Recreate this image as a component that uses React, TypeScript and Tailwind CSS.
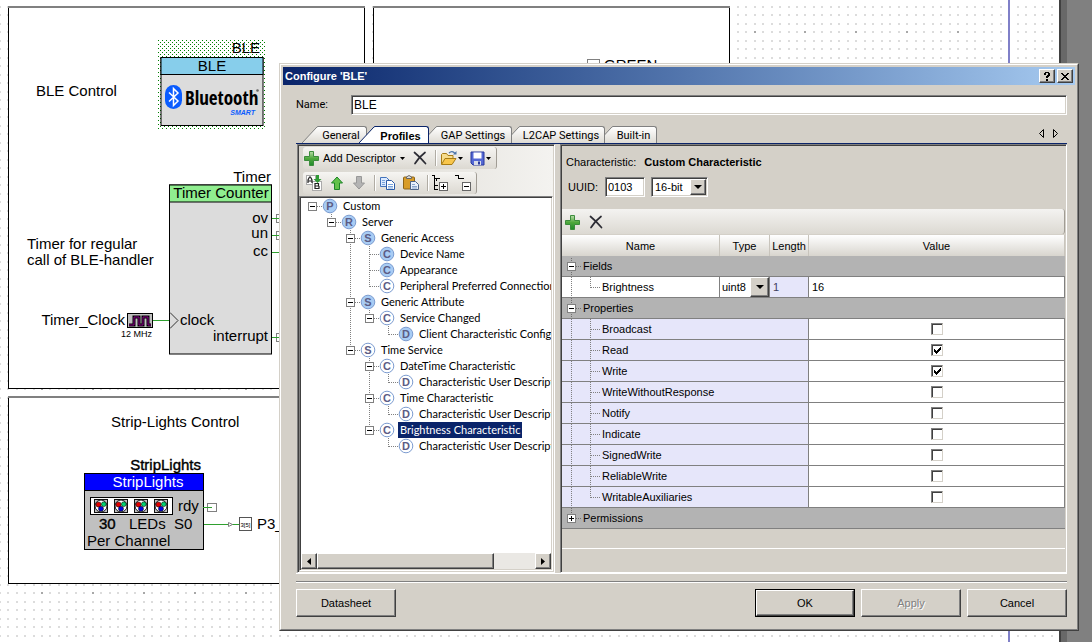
import React, { useState } from "react";

const SUNK =
  "border border-t-[#808080] border-l-[#808080] border-r-white border-b-white shadow-[inset_1px_1px_0_#404040,inset_-1px_-1px_0_#d4d0c8]";
const RAISED =
  "border border-t-white border-l-white border-r-[#404040] border-b-[#404040] bg-[#d4d0c8] shadow-[inset_-1px_-1px_0_#808080]";

/* ---------- schematic behind the dialog ---------- */

const TILE_COLS = 120;
const STEP = 1018 / TILE_COLS;

function gridPath(every: number) {
  let d = "";
  for (let r = 0; r < 6; r += every) {
    for (let c = 0; c < TILE_COLS; c += every) {
      d += `M${Math.round(c * STEP)} ${Math.round(r * 8.5)}h2v2h-2z`;
    }
  }
  return d;
}
const MINOR = gridPath(1);
const MAJOR = gridPath(6);

function Terminal({ x, y }: { x: number; y: number }) {
  return (
    <g>
      <rect x={x + 4.5} y={y - 4} width="9" height="8" fill="#fff" stroke="#808080" />
      <path d={`M${x} ${y}h9`} stroke="#2fa02f" />
    </g>
  );
}

function Led({ x }: { x: number }) {
  return (
    <g transform={`translate(${x} 499)`}>
      <rect x="0.5" y="0.5" width="13" height="13" fill="#c0c0c0" stroke="#111" />
      <circle cx="7" cy="7" r="6" fill="#fff" stroke="#111" />
      <circle cx="4.5" cy="5.5" r="2.6" fill="#e00000" stroke="#111" strokeWidth="0.6" />
      <circle cx="9.8" cy="5.2" r="2.4" fill="#00d070" stroke="#111" strokeWidth="0.6" />
      <circle cx="7" cy="9.8" r="2.5" fill="#0000e0" stroke="#111" strokeWidth="0.6" />
    </g>
  );
}

function Schematic() {
  return (
    <svg className="block h-full w-full font-['Liberation_Sans',sans-serif] text-[15px]">
      <defs>
        <pattern id="dots" x="41" y="31" width="1018" height="51" patternUnits="userSpaceOnUse">
          <path d={MINOR} fill="#dcdcdc" />
          <path d={MAJOR} fill="#a8a8a8" />
        </pattern>
        <pattern id="sel" x="158" y="40" width="4" height="4" patternUnits="userSpaceOnUse">
          <rect width="1" height="1" fill="#008000" />
          <rect x="2" y="2" width="1" height="1" fill="#008000" />
        </pattern>
      </defs>
      <rect width="100%" height="100%" fill="#fff" />
      <rect width="100%" height="100%" fill="url(#dots)" />
      <rect x="1008" width="2" height="100%" fill="#8080c8" />

      <g fill="#fff" stroke="#000">
        <rect x="8.5" y="7.5" width="356" height="381" />
        <rect x="373.5" y="7.5" width="356" height="381" />
        <rect x="8.5" y="397.5" width="721" height="186" />
      </g>
      <path d="M8 7h357M373 7h357M8 397h722" stroke="#808080" strokeWidth="2" />

      <text x="36" y="96">BLE Control</text>
      <rect x="158" y="40" width="108" height="89" fill="url(#sel)" />
      <text x="260" y="53" textAnchor="end">BLE</text>
      <rect x="161" y="57.5" width="102" height="68" fill="#dcdcdc" stroke="#000" />
      <rect x="161" y="57.5" width="102" height="17" fill="#87ceeb" stroke="#000" />
      <text x="212" y="71" textAnchor="middle">BLE</text>
      <rect x="165" y="85" width="17" height="24" rx="8.5" fill="#0a5cff" />
      <path d="M169 92.5l9 8.5-4.5 4.5V88.5l4.5 4.5-9 8.5" fill="none" stroke="#fff" strokeWidth="1.5" />
      <text x="185" y="105" fontSize="19" fontWeight="bold" fontFamily="'Open Sans Condensed','Liberation Sans Narrow','Liberation Sans',sans-serif">
        Bluetooth
      </text>
      <circle cx="257.5" cy="90.5" r="1.3" fill="#666" />
      <text x="255" y="115" fontSize="7" fontWeight="bold" fontStyle="italic" fill="#0a5cff" textAnchor="end">
        SMART
      </text>

      <text x="271" y="182" textAnchor="end">Timer</text>
      <rect x="169.5" y="185" width="102" height="169" fill="#dcdcdc" stroke="#000" />
      <rect x="169.5" y="185" width="102" height="17" fill="#90ee90" stroke="#000" />
      <text x="221" y="198" textAnchor="middle">Timer Counter</text>
      <text x="268" y="223" textAnchor="end">ov</text>
      <text x="268" y="238" textAnchor="end">un</text>
      <text x="268" y="256" textAnchor="end">cc</text>
      <text x="268" y="341" textAnchor="end">interrupt</text>
      <text x="180" y="325">clock</text>
      <path d="M170 312.5l8 8-8 8" fill="none" stroke="#333" />
      <Terminal x={272} y={218.5} />
      <Terminal x={272} y={235.5} />
      <path d="M272 252.5h9M153 320.5h16" stroke="#2fa02f" />
      <Terminal x={272} y={337.5} />
      <text x="27" y="249">Timer for regular</text>
      <text x="27" y="265">call of BLE-handler</text>
      <text x="125" y="325" textAnchor="end">Timer_Clock</text>
      <rect x="127.5" y="313.5" width="25" height="14" fill="#c0c0c0" stroke="#000" />
      <path d="M129 325h5v-8h5v8h4v-8h5v8h3" fill="none" stroke="#000" strokeWidth="3" />
      <path d="M129 325h5v-8h5v8h4v-8h5v8h3" fill="none" stroke="#900090" strokeWidth="1" />
      <text x="152" y="337" fontSize="9" textAnchor="end">12 MHz</text>

      <text x="111" y="427">Strip-Lights Control</text>
      <text x="201" y="470" textAnchor="end" stroke="#000" strokeWidth="0.4">StripLights</text>
      <rect x="84.5" y="473.5" width="119" height="76" fill="#c0c0c0" stroke="#000" />
      <rect x="84.5" y="473.5" width="119" height="17" fill="#0000ff" stroke="#000" />
      <text x="148" y="487" textAnchor="middle" fill="#fff">StripLights</text>
      <rect x="90.5" y="497.5" width="82" height="17" fill="#fff" stroke="#000" />
      <Led x={94} />
      <Led x={114} />
      <Led x={134} />
      <Led x={154} />
      <text x="178" y="511">rdy</text>
      <text x="99" y="529" stroke="#000" strokeWidth="0.4">30</text>
      <text x="129" y="529">LEDs</text>
      <text x="174" y="529">S0</text>
      <text x="87" y="546">Per Channel</text>
      <Terminal x={203} y={507.5} />
      <path d="M204 524.5h35" stroke="#2fa02f" />
      <path d="M228.5 522.5l4 2-4 2z" fill="#fff" stroke="#808080" />
      <rect x="239.5" y="517.5" width="12" height="13" fill="#fff" stroke="#555" />
      <text x="245.5" y="527" fontSize="6" textAnchor="middle">3[5]</text>
      <text x="257" y="529">P3_</text>

      <rect x="587.5" y="59.5" width="12" height="12" fill="#fff" stroke="#808080" />
      <text x="604" y="70">GREEN</text>
    </svg>
  );
}

/* ---------- icons ---------- */

const Plus = () => (
  <svg width="16" height="16" viewBox="0 0 16 16">
    <defs>
      <linearGradient id="plusg" x1="0" y1="0" x2="0" y2="1">
        <stop offset="0" stopColor="#b8dca8" />
        <stop offset="0.5" stopColor="#4fa83c" />
        <stop offset="1" stopColor="#1f8a2c" />
      </linearGradient>
    </defs>
    <path d="M5.5 1.5h4v5h5v4h-5v5h-4v-5h-5v-4h5z" fill="url(#plusg)" stroke="#3c8c3c" strokeLinejoin="round" />
  </svg>
);
const Cross = () => (
  <svg width="14" height="14" viewBox="0 0 14 14">
    <path d="M1.5 1.5Q7 6 12.5 12.5M12 1.5Q6 6 2 12.5" fill="none" stroke="#2c2c34" strokeWidth="1.7" strokeLinecap="round" />
  </svg>
);
const Caret = () => (
  <svg width="5" height="3" viewBox="0 0 5 3">
    <path d="M0 0h5L2.5 3z" fill="#000" />
  </svg>
);
const Folder = () => (
  <svg width="17" height="16" viewBox="0 0 17 16">
    <path d="M1.5 14V4.5l1-1h4l1.5 2h5V8" fill="#f6dc8c" stroke="#a87c14" />
    <path d="M1.5 14.5L5 8.5h11l-4 6z" fill="#f8c64c" stroke="#a87c14" strokeLinejoin="round" />
    <path d="M9 3q3-3 6 .5" fill="none" stroke="#4a74a8" strokeWidth="1.3" />
    <path d="M13 4.5h3.5V1z" fill="#4a74a8" />
  </svg>
);
const Floppy = () => (
  <svg width="15" height="15" viewBox="0 0 15 15">
    <path d="M1 1h13v13H3l-2-2z" fill="#5468d4" stroke="#28389c" />
    <rect x="3.5" y="1.5" width="8" height="6" fill="#fff" />
    <rect x="4" y="10" width="7" height="4" fill="#d8dce8" />
    <rect x="8" y="10.5" width="2" height="3" fill="#28389c" />
  </svg>
);
const Sort = () => (
  <svg width="16" height="16" viewBox="0 0 16 16">
    <rect x="0.5" y="0.5" width="9" height="9" fill="#fff" stroke="#aaa" />
    <rect x="6.5" y="6.5" width="9" height="9" fill="#fff" stroke="#aaa" />
    <path d="M2 8V5l1.5-3h1L6 5v3M2 6h4M9 8v6M9 8.5h3.5v2.5H9M9 13.5h4V11" fill="none" stroke="#222" strokeWidth="1.2" />
    <path d="M10 0h3v4h2.500L11.500 8 7.500 4H10z" fill="#2f9a35" />
  </svg>
);
const Arrow = ({ up }: { up?: boolean }) => (
  <svg width="14" height="14" viewBox="0 0 14 14">
    <path
      d={up ? "M7 1l5.500 6H9.500v6.500h-5V7h-3z" : "M7 13L1.500 7h3V.5h5V7h3z"}
      fill={up ? "#62c24a" : "#b4b4b4"}
      stroke={up ? "#1c8428" : "#989898"}
      strokeLinejoin="round"
    />
  </svg>
);
const Copy = () => (
  <svg width="16" height="15" viewBox="0 0 16 15">
    <path d="M.5 1.5h6l3 3v6h-9z" fill="#dceaff" stroke="#4474bc" />
    <path d="M6.5 4.5h5l3 3v6h-8z" fill="#fff" stroke="#2c5ca8" />
    <path d="M2 4.5h3M2 6.5h3M2 8.5h3M8 8.5h5M8 10.5h5M8 12h5" stroke="#78a4dc" />
  </svg>
);
const Paste = () => (
  <svg width="16" height="16" viewBox="0 0 16 16">
    <rect x="0.5" y="2" width="11" height="12" rx="1" fill="#d89c28" stroke="#8c6418" />
    <path d="M3.5 3.5V2q2.500-3 5 0v1.500z" fill="#ddd" stroke="#666" />
    <path d="M7.500 6.500h5l3 3v5h-8z" fill="#e8f0fc" stroke="#4c6488" />
    <path d="M9 9.500h3M9 11.500h5M9 13h5" stroke="#88a4cc" />
  </svg>
);
const Expand = () => (
  <svg width="16" height="16" viewBox="0 0 16 16" fill="none" stroke="#000" shapeRendering="crispEdges">
    <path d="M0 .5h2.500v14M2.500 3.500h5M2.500 10.500h3M2.500 14.500h3M4.500 3v3" />
    <rect x="7.500" y="7.500" width="8" height="8" fill="#fff" stroke="#666" />
    <path d="M9 11.500h5M11.500 9v5" />
  </svg>
);
const Collapse = () => (
  <svg width="16" height="16" viewBox="0 0 16 16" fill="none" stroke="#000" shapeRendering="crispEdges">
    <path d="M0 .5h3.500v3h5" />
    <rect x="7.500" y="7.500" width="8" height="8" fill="#fff" stroke="#666" />
    <path d="M9 11.500h5" />
  </svg>
);
const Sep = () => <span className="h-[16px] w-[2px] border-r border-l border-r-white border-l-[#b0aca4]" />;

function Tool({ label, disabled, children }: { label: string; disabled?: boolean; children: React.ReactNode }) {
  return (
    <button type="button" aria-label={label} disabled={disabled} className="flex shrink-0 items-center gap-px">
      {children}
    </button>
  );
}

/* ---------- tabs ---------- */

const tabs = [
  { name: "General", z: "z-[4]", body: "w-[49px]" },
  { name: "Profiles", z: "z-[5]", body: "w-[54px]" },
  { name: "GAP Settings", z: "z-[3]", body: "w-[75px]" },
  { name: "L2CAP Settings", z: "z-[2]", body: "w-[85px]" },
  { name: "Built-in", z: "z-[1]", body: "w-[44px]" },
];

function Tab({ t, active, onClick }: { t: (typeof tabs)[number]; active: boolean; onClick: () => void }) {
  return (
    <button
      type="button"
      role="tab"
      aria-selected={active}
      onClick={onClick}
      className={`relative -ml-2 flex h-[17px] shrink-0 ${active ? "z-[5]" : t.z}`}
    >
      <svg width="16" height="17" viewBox="0 0 16 17">
        <defs>
          <linearGradient id="slant" x1="0" y1="0" x2="0" y2="1">
            <stop offset="0" stopColor="#fff" />
            <stop offset="1" stopColor="#dedbd4" />
          </linearGradient>
        </defs>
        <path d="M0 17L14 2Q15 0.5 16 0.5V17z" fill={active ? "#fff" : "url(#slant)"} />
        <path d="M0 17L14 2Q15 0.5 16 0.5" fill="none" stroke={active ? "#0a246a" : "#808080"} />
      </svg>
      <span
        className={`flex h-full items-center justify-center rounded-tr-[3px] border-t border-r pt-px pr-[2px] whitespace-nowrap ${t.body} ${
          active
            ? "border-[#0a246a] bg-white font-['Liberation_Sans',sans-serif] font-bold"
            : "border-[#808080] bg-linear-to-b from-white to-[#dedbd4] font-['Roboto',sans-serif]"
        }`}
      >
        {t.name}
      </span>
    </button>
  );
}

/* ---------- tree ---------- */

type Node = { cols: string; box?: boolean; k: string; solid?: boolean; text: string; sel?: boolean };
const nodes: Node[] = [
  { cols: "-", box: true, k: "P", solid: true, text: "Custom" },
  { cols: " L", box: true, k: "R", solid: true, text: "Server" },
  { cols: "  T", box: true, k: "S", solid: true, text: "Generic Access" },
  { cols: "  |T", k: "C", solid: true, text: "Device Name" },
  { cols: "  |T", k: "C", solid: true, text: "Appearance" },
  { cols: "  |L", k: "C", text: "Peripheral Preferred Connection" },
  { cols: "  T", box: true, k: "S", solid: true, text: "Generic Attribute" },
  { cols: "  |L", box: true, k: "C", text: "Service Changed" },
  { cols: "  | L", k: "D", solid: true, text: "Client Characteristic Configuration" },
  { cols: "  L", box: true, k: "S", text: "Time Service" },
  { cols: "   T", box: true, k: "C", text: "DateTime Characteristic" },
  { cols: "   |L", k: "D", text: "Characteristic User Description" },
  { cols: "   T", box: true, k: "C", text: "Time Characteristic" },
  { cols: "   |L", k: "D", text: "Characteristic User Description" },
  { cols: "   L", box: true, k: "C", text: "Brightness Characteristic", sel: true },
  { cols: "    L", k: "D", text: "Characteristic User Description" },
];
const guide: Record<string, string> = { " ": "", "|": "M9.5 0v16", T: "M9.5 0v16M9.5 8.5H19", L: "M9.5 0v9M9.5 8.5H19", "-": "M9.5 8.5H19" };

function TreeRow({ n }: { n: Node }) {
  const last = n.cols.length - 1;
  return (
    <li role="treeitem" aria-selected={!!n.sel} className="flex h-4 items-center whitespace-nowrap">
      {n.cols.split("").map((c, i) => (
        <svg key={i} width="19" height="16" className="shrink-0" shapeRendering="crispEdges" fill="none">
          <path d={guide[c]} stroke="#808080" strokeDasharray="1 1" />
          {n.box && i === last && (
            <>
              <rect x="5.5" y="4.5" width="8" height="8" fill="#fff" stroke="#808080" />
              <path d="M7 8.5h5" stroke="#000" />
            </>
          )}
        </svg>
      ))}
      <svg width="16" height="16" viewBox="0 0 16 16" className="shrink-0">
        <circle cx="8" cy="8" r="6.8" fill={n.solid ? "#a8ccf4" : "#fff"} stroke="#7c9cd0" />
        <text x="8" y="12" textAnchor="middle" fontSize="11" fontWeight="bold" fill="#5c5c84" fontFamily="'Liberation Sans',sans-serif">
          {n.k}
        </text>
      </svg>
      <span className={`ml-[3px] px-[2px] font-['Lato',sans-serif] leading-4 ${n.sel ? "bg-[#0a246a] text-white" : ""}`}>{n.text}</span>
    </li>
  );
}

/* ---------- property grid ---------- */

const props = ["Broadcast", "Read", "Write", "WriteWithoutResponse", "Notify", "Indicate", "SignedWrite", "ReliableWrite", "WritableAuxiliaries"];

function GroupRow({ text, plus, first }: { text: string; plus?: boolean; first?: boolean }) {
  return (
    <tr className="h-[21px] bg-[#b3b3b3]">
      <th colSpan={4} scope="rowgroup" className="border-b border-[#808080] p-0 text-left font-normal">
        <button type="button" className="flex h-5 items-center">
          <svg width="20" height="20" shapeRendering="crispEdges">
            <path d={`M9.5 ${first ? 2 : 0}V${plus ? 10 : 20}M9.5 10.5H20`} stroke="#707070" strokeDasharray="1 1" />
            <rect x="5.5" y="6.5" width="8" height="8" fill="#fff" stroke="#808080" />
            <path d={plus ? "M7 10.5h5M9.5 8v5" : "M7 10.5h5"} stroke="#000" />
          </svg>
          <span className="ml-px">{text}</span>
        </button>
      </th>
    </tr>
  );
}

function Branch({ last }: { last?: boolean }) {
  return (
    <svg width="39" height="20" className="shrink-0" shapeRendering="crispEdges" fill="none">
      <path d={`M9.5 0V20M28.5 0V${last ? 11 : 20}M28.5 10.5H39`} stroke="#808080" strokeDasharray="1 1" />
    </svg>
  );
}

function Check({ name, on }: { name: string; on: boolean }) {
  const [v, setV] = useState(on);
  return (
    <span className="relative mx-auto block h-3 w-3">
      <input
        id={"p-" + name}
        type="checkbox"
        checked={v}
        onChange={(e) => setV(e.target.checked)}
        className="block h-3 w-3 appearance-none border border-t-[#808080] border-r-[#d4d0c8] border-b-[#d4d0c8] border-l-[#808080] bg-white shadow-[inset_1px_1px_0_#404040]"
      />
      {v && (
        <svg width="12" height="12" className="pointer-events-none absolute inset-0" shapeRendering="crispEdges">
          <path d="M3 5v3l2 2 5-5V2L5 7z" fill="#000" />
        </svg>
      )}
    </span>
  );
}

const DropArrow = ({ className }: { className: string }) => (
  <span className={`pointer-events-none absolute flex items-center justify-center ${RAISED} ${className}`}>
    <svg width="8" height="4" viewBox="0 0 8 4">
      <path d="M0 0h8L4 4z" />
    </svg>
  </span>
);

const headCell = "border-r border-[#c8c4bc] bg-linear-to-b from-white to-[#d8d5ce] p-0 text-center font-normal";

function PropertyGrid() {
  return (
    <table className="w-full table-fixed border-separate border-spacing-0">
      <colgroup>
        <col className="w-[158px]" />
        <col className="w-[50px]" />
        <col className="w-[39px]" />
        <col />
      </colgroup>
      <thead>
        <tr className="h-[21px]">
          <th className={headCell}>Name</th>
          <th className={headCell}>Type</th>
          <th className={headCell}>Length</th>
          <th className={headCell}>Value</th>
        </tr>
      </thead>
      <tbody>
        <GroupRow text="Fields" first />
        <tr className="h-[21px] bg-white">
          <td className="border-r border-b border-[#808080] p-0">
            <label htmlFor="ftype" className="flex h-5 items-center">
              <Branch last />
              <span className="ml-px">Brightness</span>
            </label>
          </td>
          <td className="border-r border-b border-[#808080] p-0">
            <span className="relative block h-5">
              <select id="ftype" className="block h-5 w-full appearance-none pl-[2px]">
                <option>uint8</option>
                <option>uint16</option>
              </select>
              <DropArrow className="inset-y-0 right-0 w-[19px]" />
            </span>
          </td>
          <td className="border-r border-b border-[#808080] bg-[#e6e6fa] p-0 pl-[3px] text-[#404060]">1</td>
          <td className="border-r border-b border-[#808080] p-0 pl-[3px]">16</td>
        </tr>
        <GroupRow text="Properties" />
        {props.map((p, i) => (
          <tr key={p} className="h-[21px]">
            <td colSpan={3} className="border-r border-b border-[#808080] bg-[#e6e6fa] p-0">
              <label htmlFor={"p-" + p} className="flex h-5 items-center">
                <Branch last={i === props.length - 1} />
                <span className="ml-px">{p}</span>
              </label>
            </td>
            <td className="border-r border-b border-[#808080] bg-white p-0">
              <Check name={p} on={p === "Read" || p === "Write"} />
            </td>
          </tr>
        ))}
        <GroupRow text="Permissions" plus />
      </tbody>
    </table>
  );
}

/* ---------- dialog ---------- */

const strip =
  "flex h-[22px] w-fit items-center rounded-[3px] border-r border-[#a09c94] bg-linear-to-b from-[#f6f5f2] to-[#dcd9d2]";

function Dialog() {
  const [tab, setTab] = useState("Profiles");
  return (
    <section
      role="dialog"
      aria-labelledby="dlg-title"
      className="absolute top-[63px] right-[13px] bottom-[11px] left-[279px] border border-t-[#d4d0c8] border-r-[#404040] border-b-[#404040] border-l-[#d4d0c8] bg-[#d4d0c8]"
    >
      <div className="flex h-full flex-col border border-t-white border-r-[#808080] border-b-[#808080] border-l-white p-[2px]">
        <header className="flex h-[18px] shrink-0 items-center justify-between bg-linear-to-r from-[#0a246a] to-[#a6caf0] pr-[2px] pl-[2px]">
          <h1 id="dlg-title" className="font-bold text-white">Configure 'BLE'</h1>
          <div className="flex gap-[2px]">
            <button type="button" aria-label="Help" className={`flex h-[14px] w-4 items-center justify-center ${RAISED}`}>
              <svg width="8" height="9" viewBox="0 0 8 9" shapeRendering="crispEdges">
                <path d="M1 1h1V0h4v1h1v3H6v1H5v1H3V4h1V3h1V1H3v2H1zM3 7h2v2H3z" />
              </svg>
            </button>
            <button type="button" aria-label="Close" className={`flex h-[14px] w-4 items-center justify-center ${RAISED}`}>
              <svg width="8" height="7" viewBox="0 0 8 7" shapeRendering="crispEdges">
                <path d="M0 0h2v1h1v1h2V1h1V0h2v1H7v1H6v1H5v1h1v1h1v1h1v1H6V6H5V5H3v1H2v1H0V6h1V5h1V4h1V3H2V2H1V1H0z" />
              </svg>
            </button>
          </div>
        </header>

        <div className="flex min-h-0 flex-1 flex-col pr-2 pb-[10px] pl-[13px]">
          <div className="mt-[10px] flex h-5 shrink-0 items-center">
            <label htmlFor="name" className="w-[55px] shrink-0 font-['Roboto',sans-serif]">Name:</label>
            <input id="name" defaultValue="BLE" className={`h-5 min-w-0 flex-1 bg-white px-[2px] text-[12px] ${SUNK}`} />
          </div>

          <div className="mt-[11px] flex h-[18px] shrink-0 items-start justify-between border-b border-[#0a246a]">
            <div role="tablist" className="flex pl-[14px]">
              {tabs.map((t) => (
                <Tab key={t.name} t={t} active={tab === t.name} onClick={() => setTab(t.name)} />
              ))}
            </div>
            <div className="flex gap-[9px] pt-[3px] pr-[9px]">
              <button type="button" aria-label="Previous tab">
                <svg width="5" height="9"><path d="M4.5.5v8L.5 4.5z" fill="none" stroke="#000" /></svg>
              </button>
              <button type="button" aria-label="Next tab">
                <svg width="5" height="9"><path d="M.5.5v8l4-4z" fill="none" stroke="#000" /></svg>
              </button>
            </div>
          </div>

          <div className="flex min-h-0 flex-1 border-b border-white pl-px">
            <div className={`flex w-[258px] shrink-0 flex-col p-px ${SUNK}`}>
              <div className="flex h-[50px] shrink-0 flex-col gap-[3px] bg-linear-to-r from-[#d8d5ce] to-[#f4f3f0] pt-px pl-1">
                <div className={`${strip} gap-2 pr-[5px] pl-px`}>
                  <button type="button" className="flex items-center gap-[3px] whitespace-nowrap">
                    <Plus />
                    Add Descriptor
                    <span className="ml-px"><Caret /></span>
                  </button>
                  <Tool label="Delete"><Cross /></Tool>
                  <Sep />
                  <span className="-ml-[5px] flex items-center gap-[7px]">
                    <Tool label="Open"><Folder /><Caret /></Tool>
                    <Tool label="Save"><Floppy /><Caret /></Tool>
                  </span>
                </div>
                <div className={`${strip} gap-2 pr-[5px] pl-[3px]`}>
                  <Tool label="Sort"><Sort /></Tool>
                  <Tool label="Move up"><Arrow up /></Tool>
                  <Tool label="Move down" disabled><Arrow /></Tool>
                  <Sep />
                  <span className="-ml-1 flex items-center gap-[7px]">
                    <Tool label="Copy"><Copy /></Tool>
                    <Tool label="Paste"><Paste /></Tool>
                  </span>
                  <Sep />
                  <span className="-ml-[5px] flex items-center gap-[7px]">
                    <Tool label="Expand all"><Expand /></Tool>
                    <Tool label="Collapse all"><Collapse /></Tool>
                  </span>
                </div>
              </div>
              <div className={`flex min-h-0 flex-1 flex-col bg-white p-px ${SUNK}`}>
                <ul role="tree" className="min-h-0 flex-1 overflow-hidden pl-[2px]">
                  {nodes.map((n, i) => (
                    <TreeRow key={i} n={n} />
                  ))}
                </ul>
                <div className="flex h-4 shrink-0 bg-[#eae8e4]">
                  <button type="button" aria-label="Scroll left" className={`flex w-4 items-center justify-center ${RAISED}`}>
                    <svg width="4" height="7"><path d="M4 0v7L0 3.5z" /></svg>
                  </button>
                  <div className={`w-[177px] ${RAISED}`} />
                  <div className="flex-1" />
                  <button type="button" aria-label="Scroll right" className={`flex w-4 items-center justify-center ${RAISED}`}>
                    <svg width="4" height="7"><path d="M0 0v7l4-3.5z" /></svg>
                  </button>
                </div>
              </div>
            </div>

            <div className={`ml-[5px] flex min-w-0 flex-1 flex-col p-px ${SUNK}`}>
              <div className="flex h-[63px] shrink-0 flex-col pt-[9px] pl-1">
                <p className="flex h-[14px] items-center">
                  Characteristic:<b className="ml-2">Custom Characteristic</b>
                </p>
                <div className="mt-2 flex h-5 items-center pl-[2px]">
                  <label htmlFor="uuid" className="w-[37px]">UUID:</label>
                  <input id="uuid" defaultValue="0103" className={`h-5 w-10 bg-white px-[2px] ${SUNK}`} />
                  <span className="relative ml-[6px] block">
                    <select aria-label="UUID size" className={`block h-5 w-[57px] appearance-none bg-white pl-[3px] ${SUNK}`}>
                      <option>16-bit</option>
                      <option>128-bit</option>
                    </select>
                    <DropArrow className="inset-y-[2px] right-[2px] w-4" />
                  </span>
                </div>
              </div>
              <div className="mb-px flex h-[25px] shrink-0 items-center gap-2 rounded-r-[3px] border-r border-[#a09c94] bg-linear-to-b from-[#f4f3f1] to-[#dcd9d2] pl-[3px]">
                <Tool label="Add field"><Plus /></Tool>
                <Tool label="Remove field"><Cross /></Tool>
              </div>
              <PropertyGrid />
              <div className="mt-[19px] border-t border-white" />
            </div>
          </div>

          <hr className="mt-[7px] h-[2px] shrink-0 border-t border-b border-t-[#808080] border-b-white" />
          <footer className="mt-[6px] flex h-7 shrink-0 gap-[6px]">
            <button type="button" className={`mr-auto w-[100px] ${RAISED}`}>Datasheet</button>
            <button type="button" className="w-[100px] border border-black">
              <span className={`flex h-full items-center justify-center ${RAISED}`}>OK</span>
            </button>
            <button type="button" disabled className={`w-[100px] text-[#808080] [text-shadow:1px_1px_0_#fff] ${RAISED}`}>Apply</button>
            <button type="button" className={`w-[100px] ${RAISED}`}>Cancel</button>
          </footer>
        </div>
      </div>
    </section>
  );
}

export default function App() {
  return (
    <main className="relative flex h-screen overflow-hidden bg-[#808080] font-['Liberation_Sans',Arial,sans-serif] text-[11px] leading-[14px] text-black">
      <div className="min-w-0 flex-1">
        <Schematic />
      </div>
      <div className="w-[33px] shrink-0">
        <div className="h-full w-2 border-l-2 border-[#404040] bg-[#686868]" />
      </div>
      <Dialog />
    </main>
  );
}
